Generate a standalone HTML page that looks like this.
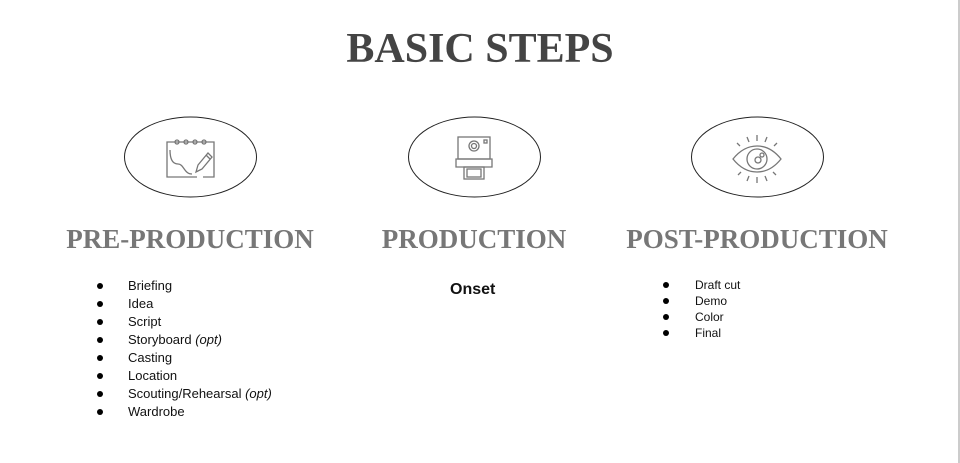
<!DOCTYPE html>
<html><head><style>
body{margin:0;width:960px;height:463px;background:#fff;position:relative;overflow:hidden;font-family:"Liberation Sans",sans-serif}
.t{position:absolute;white-space:nowrap}
h1{position:absolute;left:0;width:960px;top:25px;margin:0;text-align:center;font-family:"Liberation Serif",serif;font-weight:bold;font-size:42px;color:#444}
.h{position:absolute;font-family:"Liberation Serif",serif;font-weight:bold;font-size:27px;color:#777;top:224px;text-align:center;white-space:nowrap}
ul{position:absolute;margin:0;padding:0;list-style:none;color:#111}
li{position:relative}
li:before{content:"";position:absolute;width:6px;height:6px;border-radius:50%;background:#000}
.l1 li{font-size:13px;line-height:18px;padding-left:0}
.l1 li:before{left:-31px;top:6px}
.l2 li{font-size:12px;line-height:16px}
.l2 li:before{left:-32px;top:5px}
</style></head><body>
<div style="position:absolute;left:958px;top:0;width:2px;height:463px;background:#ccc"></div>
<h1>BASIC STEPS</h1>
<svg width="960" height="463" style="position:absolute;left:0;top:0" fill="none">
<ellipse cx="190.5" cy="157" rx="66" ry="40" stroke="#222" stroke-width="1"/>
<ellipse cx="474.5" cy="157" rx="66" ry="40" stroke="#222" stroke-width="1"/>
<ellipse cx="757.5" cy="157" rx="66" ry="40" stroke="#222" stroke-width="1"/>
<g stroke="#777" stroke-width="1.3">
<path d="M172 142h-5v35h30 M203 177h11v-35h-3"/>
<path d="M172 142h39"/>
<circle cx="177" cy="142" r="2"/><circle cx="186" cy="142" r="2"/><circle cx="195" cy="142" r="2"/><circle cx="204" cy="142" r="2"/>
<path d="M170 150c0 8 2 14 8 14s6 10 14 10"/>
<path d="M196 172l2-7 10-12 4 4-10 12z M206 155l4 4"/>
<rect x="458" y="137" width="32" height="22"/>
<circle cx="474" cy="146" r="5"/><circle cx="474" cy="146" r="2.5"/>
<rect x="484" y="140" width="3" height="3"/>
<path d="M456 159h36v8h-36z"/>
<rect x="464" y="167" width="20" height="12"/><rect x="467" y="169" width="14" height="8"/>
<path d="M733 159c8-10 17-13 24-13s16 3 24 13c-8 10-17 13-24 13s-16-3-24-13z"/>
<circle cx="757" cy="159" r="10"/><circle cx="758" cy="160" r="3"/><circle cx="762" cy="155" r="2"/>
<path d="M757 135v6 M747 137l2 5 M767 137l-2 5 M737 143l3 3 M777 143l-3 3 M757 177v6 M747 181l2-5 M767 181l-2-5 M738 175l3-3 M776 175l-3-3"/>
</g>
</svg>
<div class="h" style="left:40px;width:300px">PRE-PRODUCTION</div>
<div class="h" style="left:324px;width:300px">PRODUCTION</div>
<div class="h" style="left:607px;width:300px">POST-PRODUCTION</div>
<ul class="l1" style="left:128px;top:277px">
<li>Briefing</li><li>Idea</li><li>Script</li><li>Storyboard <i>(opt)</i></li><li>Casting</li><li>Location</li><li>Scouting/Rehearsal <i>(opt)</i></li><li>Wardrobe</li>
</ul>
<div class="t" style="left:450px;top:281px;font-size:16px;font-weight:bold;color:#111">Onset</div>
<ul class="l2" style="left:695px;top:277px">
<li>Draft cut</li><li>Demo</li><li>Color</li><li>Final</li>
</ul>
</body></html>
